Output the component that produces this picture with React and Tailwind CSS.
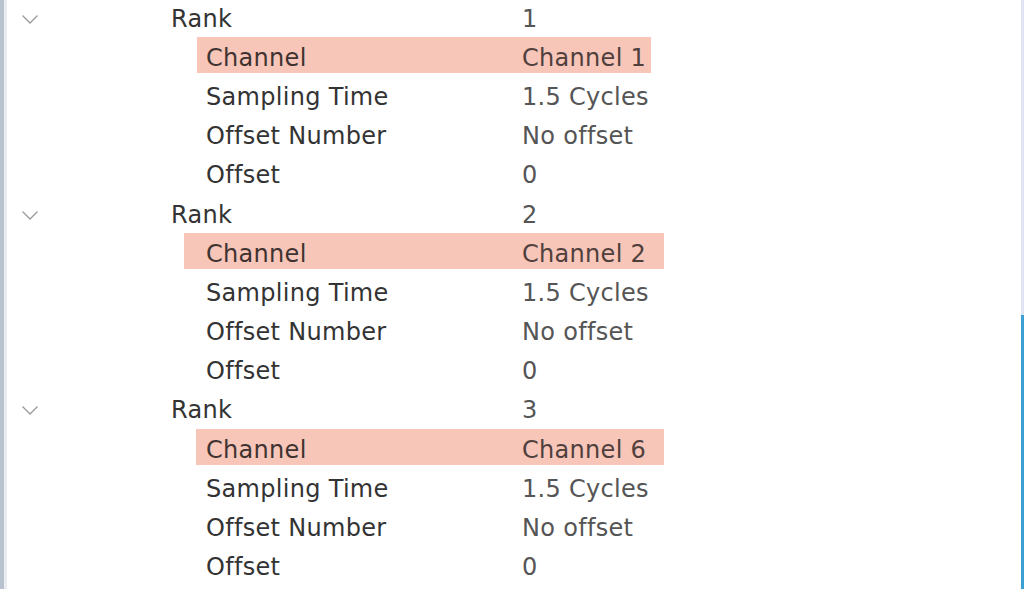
import React from 'react';

const groups = [
  { rank: '1', channel: 'Channel 1', hl: { box: 'ml-[197px] w-[454px]', pad: 'pl-[9px]' } },
  { rank: '2', channel: 'Channel 2', hl: { box: 'ml-[184px] w-[480px]', pad: 'pl-[22px]' } },
  { rank: '3', channel: 'Channel 6', hl: { box: 'ml-[196px] w-[468px]', pad: 'pl-[10px]' } },
];

const Chevron = () => (
  <svg width="18" height="11" viewBox="0 0 18 11" className="text-[#9a9a9a]">
    <path d="M1.5 1.5 L9 9 L16.5 1.5" fill="none" stroke="currentColor" strokeWidth="1.3" />
  </svg>
);

const Row = ({ label, value }) => (
  <div className="h-[39.2px] flex items-center">
    <span className="ml-[206px] w-[316px] text-[#333333]">{label}</span>
    <span className="text-[#555555]">{value}</span>
  </div>
);

const App = () => {
  return (
    <div
      className="w-[1024px] h-[589px] overflow-hidden bg-white flex text-[24px] tracking-[0.3px]"
      style={{ fontFamily: '"DejaVu Sans", Verdana, sans-serif' }}
    >
      <div className="w-[4px] bg-[#b8c3cf] shrink-0" />
      <div className="w-[3px] bg-[#e9edf1] shrink-0" />
      <div className="flex-1 flex flex-col -mt-[1px] -ml-[7px]">
        {groups.map((g) => (
          <div key={g.rank}>
            <div className="h-[39.2px] flex items-center">
              <div className="w-[171px] pl-[21px] flex items-center pt-[1px]">
                <Chevron />
              </div>
              <span className="w-[351px] text-[#333333]">Rank</span>
              <span className="text-[#555555]">{g.rank}</span>
            </div>
            <div className="h-[39.2px] flex items-start">
              <div className={`h-[36px] -mt-[1px] pt-[6px] flex items-center bg-[#f8c5b9] ${g.hl.box} ${g.hl.pad}`}>
                <span className="w-[316px] text-[#3f3331]">Channel</span>
                <span className="text-[#4f403d]">{g.channel}</span>
              </div>
            </div>
            <Row label="Sampling Time" value="1.5 Cycles" />
            <Row label="Offset Number" value="No offset" />
            <Row label="Offset" value="0" />
          </div>
        ))}
      </div>
      <div className="w-[3px] shrink-0 flex flex-col">
        <div className="h-[315px] bg-[#dfe3f3]" />
        <div className="flex-1 bg-[#3a9fd2]" />
      </div>
    </div>
  );
};

export default App;
